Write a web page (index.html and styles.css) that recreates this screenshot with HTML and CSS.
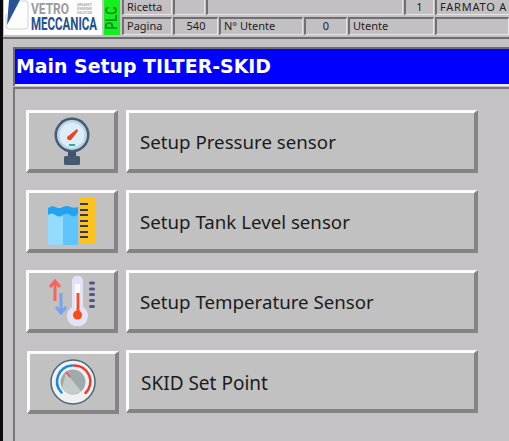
FILE: index.html
```html
<!DOCTYPE html>
<html lang="it">
<head>
<meta charset="utf-8">
<title>Main Setup TILTER-SKID</title>
<link rel="stylesheet" href="styles.css">
</head>
<body>
<div class="shell">
  <header class="header">
    <div class="logo">
      <svg class="logo-svg" width="99" height="35" viewBox="0 0 99 35">
        <path d="M5 0 L16 0 L3 25 Z" fill="#2a5595"/>
        <path d="M17 1 L22 1 Q24 1 24 4 L24 26 Q24 29 21 29 L5 29 Q2 29 2 26 L2 14" fill="none" stroke="#cfd1d6" stroke-width="1"/>
        <text x="27" y="14" class="logo-vetro" textLength="38" lengthAdjust="spacingAndGlyphs">VETRO</text>
        <text x="27" y="30" class="logo-mecc" textLength="66" lengthAdjust="spacingAndGlyphs">MECCANICA</text>
        <text x="73" y="6" class="logo-tiny" textLength="15" lengthAdjust="spacingAndGlyphs">GRANT</text>
        <text x="73" y="10" class="logo-tiny" textLength="15" lengthAdjust="spacingAndGlyphs">ENGINE</text>
        <text x="73" y="14" class="logo-tiny" textLength="15" lengthAdjust="spacingAndGlyphs">SOLUTION</text>
      </svg>
    </div>
    <div class="plc"><span class="plc-text">PLC</span></div>
    <div class="cells">
      <div class="row row-top">
        <div class="cell">Ricetta</div>
        <div class="cell"></div>
        <div class="cell"></div>
        <div class="cell cell-c">1</div>
        <div class="cell cell-last">FARMATO A</div>
      </div>
      <div class="row row-bottom">
        <div class="cell">Pagina</div>
        <div class="cell cell-c">540</div>
        <div class="cell">N° Utente</div>
        <div class="cell cell-c">0</div>
        <div class="cell">Utente</div>
        <div class="cell cell-last"></div>
      </div>
    </div>
  </header>
  <h1 class="title"><span class="title-text">Main Setup TILTER-SKID</span></h1>
  <main class="panel">
    <div class="menu">
      <button class="btn icon-btn" type="button" aria-label="Pressure">
        <svg class="icon" width="36" height="48" viewBox="0 0 36 48">
          <rect x="14" y="32" width="8" height="9" fill="#3f5468"/>
          <rect x="10" y="39" width="16" height="9" rx="1.5" fill="#445a70"/>
          <circle cx="18" cy="18" r="17.5" fill="#465b70"/>
          <circle cx="18" cy="18" r="15" fill="#b9d5ec"/>
          <circle cx="18" cy="18" r="12.5" fill="#dcecf8"/>
          <path d="M13 20 L23 12 L24 14 L17 23 Q13 24 13 20 Z" fill="#f0411f"/>
          <rect x="15" y="27" width="6" height="2" fill="#18b7a2"/>
        </svg>
      </button>
      <button class="btn text-btn" type="button">Setup Pressure sensor</button>

      <button class="btn icon-btn" type="button" aria-label="Tank level">
        <svg class="icon" width="48" height="48" viewBox="0 0 48 48">
          <rect x="0" y="10" width="15" height="38" fill="#93dcff"/>
          <rect x="15" y="10" width="15" height="38" fill="#5fc5fb"/>
          <path d="M0 11 Q4 8 7.500 10 T15 10 T22.500 10 T30 10 L30 17 Q26 21 22.500 18 T15 18 T7.500 18 T0 18 Z" fill="#23a3ef"/>
          <rect x="32" y="0" width="15" height="47" fill="#fdc31d"/>
          <g fill="#33394a">
            <rect x="32" y="6" width="8" height="2"/>
            <rect x="32" y="12" width="8" height="2"/>
            <rect x="32" y="17" width="8" height="2"/>
            <rect x="32" y="23" width="8" height="2"/>
            <rect x="32" y="28" width="8" height="2"/>
            <rect x="32" y="34" width="8" height="2"/>
            <rect x="32" y="39" width="8" height="2"/>
          </g>
        </svg>
      </button>
      <button class="btn text-btn" type="button">Setup Tank Level sensor</button>

      <button class="btn icon-btn" type="button" aria-label="Temperature">
        <svg class="icon" width="48" height="50" viewBox="0 0 48 50">
          <path d="M7 25 L7 6 M2 11 L7 5 L12 11" fill="none" stroke="#f8645a" stroke-width="3"/>
          <path d="M13 17 L13 36 M8 31 L13 37 L18 31" fill="none" stroke="#76a2f2" stroke-width="3"/>
          <path d="M24 5 A5.500 5.500 0 0 1 35 5 L35 31 A10.500 10.500 0 1 1 24 31 Z" fill="#e4e2f5"/>
          <path d="M27 8 L27 32 L32 32 L32 8 Z" fill="#fbfbff"/>
          <rect x="28.500" y="17" width="3" height="20" fill="#f5502a"/>
          <circle cx="29.500" cy="39" r="4.500" fill="#fb4a12"/>
          <g fill="#54548c">
            <rect x="41" y="5.500" width="6" height="3" rx="1.500"/>
            <rect x="41" y="11.500" width="6" height="3" rx="1.500"/>
            <rect x="41" y="17" width="6" height="3" rx="1.500"/>
            <rect x="41" y="23" width="6" height="3" rx="1.500"/>
            <rect x="41" y="29" width="6" height="3" rx="1.500"/>
          </g>
        </svg>
      </button>
      <button class="btn text-btn" type="button">Setup Temperature Sensor</button>

      <button class="btn icon-btn icon-btn-last" type="button" aria-label="Set point">
        <svg class="icon" width="46" height="46" viewBox="0 0 46 46">
          <circle cx="23" cy="23" r="22" fill="#eef1f2" stroke="#4e6676" stroke-width="1.500"/>
          <path d="M11.500 33.500 A16 16 0 0 1 22 6.500" fill="none" stroke="#1f86d8" stroke-width="2.500" stroke-linecap="round"/>
          <path d="M24 6.500 A16 16 0 0 1 35.500 34" fill="none" stroke="#ee3a2c" stroke-width="2.500" stroke-linecap="round"/>
          <circle cx="23" cy="23" r="12.500" fill="#9eabaa"/>
          <path d="M16 14 L31 32 A12.500 12.500 0 0 1 12 29 Z" fill="#c4cccb"/>
          <path d="M16 13 L20 18" stroke="#e8554a" stroke-width="1.500"/>
        </svg>
      </button>
      <button class="btn text-btn text-btn-last" type="button">SKID Set Point</button>
    </div>
  </main>
</div>
</body>
</html>
```
FILE: styles.css
```css
* { box-sizing: border-box; }
html, body { margin: 0; padding: 0; height: 100%; }
body {
  width: 509px;
  height: 441px;
  overflow: hidden;
  background: #c4c2c4;
  font-family: "Noto Sans", sans-serif;
  color: #111;
}
.shell {
  height: 441px;
  border-left: 3px solid #0a0a0a;
  display: flex;
  flex-direction: column;
}
.header {
  display: flex;
  height: 39px;
  padding-bottom: 2px;
  border-bottom: 2px solid #6d6d6d;
  flex: none;
}
.logo {
  width: 98px;
  height: 35px;
  margin-left: 1px;
  background: #fdfdfd;
}
.logo-svg { display: block; }
.logo-vetro { font: 700 14px "Roboto", sans-serif; fill: #969ba2; }
.logo-mecc { font: 700 18px "Roboto", sans-serif; fill: #24508f; }
.logo-tiny { font: 700 3px "Roboto", sans-serif; fill: #a9adb3; }
.plc {
  width: 16px;
  height: 35px;
  margin-left: 2px;
  background: #14f01e;
  display: flex;
  align-items: center;
  justify-content: center;
}
.plc-text {
  writing-mode: vertical-rl;
  transform: rotate(180deg) scaleY(0.72);
  font: 700 16px/16px "Liberation Sans", sans-serif;
  color: #0b8f26;
}
.cells {
  flex: 1;
  margin-left: 2px;
  display: flex;
  flex-direction: column;
  gap: 2px;
  min-width: 0;
}
.row { display: grid; gap: 1px; }
.row-top { height: 15px; grid-template-columns: 50px 32px 197px 30px 1fr; }
.row-bottom { height: 18px; grid-template-columns: 50px 45px 84px 43px 86px 1fr; }
.cell {
  border-style: solid;
  border-width: 2px 1px 1px 2px;
  border-color: #707070 #e6e6e6 #e6e6e6 #707070;
  background: #c2c0c2;
  font: 11px/14px "Noto Sans", sans-serif;
  padding-left: 3px;
  white-space: nowrap;
  color: #222;
}
.row-top .cell { border-top-width: 0; line-height: 13px; }
.row-top .cell-last { letter-spacing: 0.8px; border-right: 0; }
.cell-c { text-align: center; padding-left: 0; }
.title {
  flex: none;
  margin: 8px 0 1px 10px;
  height: 39px;
  border-style: solid;
  border-width: 2px 0 0 2px;
  border-color: #6d6d6d;
  background: #0000ff;
  box-shadow: inset 0 -2px 0 #ecebf5;
  padding: 4px 0 0 1px;
  color: #fff;
  font: 700 18.900px/26px "DejaVu Sans", sans-serif;
}
.panel {
  flex: 1;
  margin-left: 10px;
  border-left: 2px solid #777;
  border-top: 2px solid #777;
  padding: 21px 0 0 11px;
}
.menu {
  display: grid;
  grid-template-columns: 92px 352px;
  grid-auto-rows: 63px;
  column-gap: 8px;
  row-gap: 17px;
}
.btn {
  margin: 0;
  padding: 0;
  background: #c1c1c1;
  border-style: solid;
  border-width: 3px 4px 4px 3px;
  border-color: #fbfbfb #848484 #848484 #fbfbfb;
  font: inherit;
  color: inherit;
}
.icon-btn { display: flex; align-items: center; justify-content: center; }
.icon-btn-last { transform: translate(1px, 1px); }
.icon { display: block; filter: blur(0.35px); }
.text-btn {
  text-align: left;
  padding-left: 11px;
  font: 18.700px "Noto Sans", sans-serif;
  color: #1c1c1c;
}
.text-btn-last { padding: 3px 0 0 12px; font-size: 19px; }
```
